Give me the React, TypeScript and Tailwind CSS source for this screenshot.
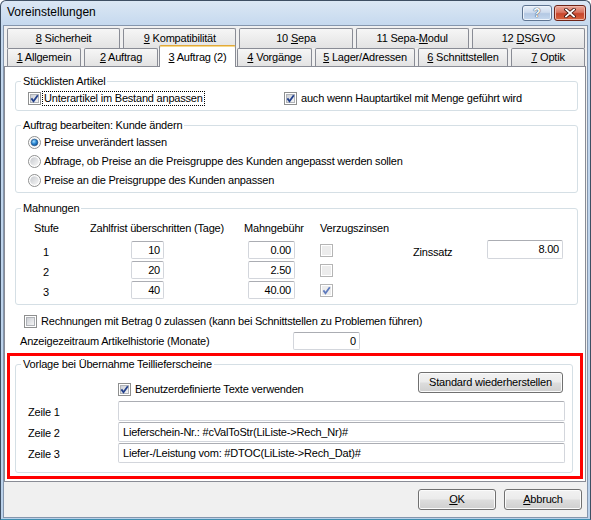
import React from 'react';

type CheckProps = { checked?: boolean; disabled?: boolean };

const CheckBox: React.FC<CheckProps> = ({ checked = false, disabled = false }) => (
  <svg width="13" height="13" viewBox="0 0 13 13" className="block shrink-0">
    <defs>
      <linearGradient id="cb-in" x1="0" y1="0" x2="1" y2="1">
        <stop offset="0" stopColor="#c9ccd2" />
        <stop offset="1" stopColor="#f7f7f7" />
      </linearGradient>
    </defs>
    <rect x="0.5" y="0.5" width="12" height="12" fill="#fff" stroke={disabled ? '#b5b5b5' : '#8e8f8f'} />
    {disabled ? (
      <rect x="2" y="2" width="9" height="9" fill="#ececec" />
    ) : (
      <rect x="2.5" y="2.5" width="8" height="8" fill="url(#cb-in)" stroke="#b0b3b8" />
    )}
    {checked && (
      <path
        d="M3.4 6.4 L5.5 9.3 L9.8 3.3"
        fill="none"
        stroke={disabled ? '#5f7bbd' : '#22408c'}
        strokeWidth="1.8"
      />
    )}
  </svg>
);

const Radio: React.FC<{ checked?: boolean }> = ({ checked = false }) => (
  <svg width="13" height="13" viewBox="0 0 13 13" className="block shrink-0">
    <defs>
      <linearGradient id="rb-in" x1="0" y1="0" x2="1" y2="1">
        <stop offset="0" stopColor="#c6c9ce" />
        <stop offset="1" stopColor="#f7f7f7" />
      </linearGradient>
      <radialGradient id="rb-dot" cx="0.4" cy="0.35" r="0.7">
        <stop offset="0" stopColor="#a8e0ff" />
        <stop offset="0.5" stopColor="#2b88d4" />
        <stop offset="1" stopColor="#0c4a8c" />
      </radialGradient>
    </defs>
    <circle cx="6.5" cy="6.5" r="6" fill="#fff" stroke="#8e8f8f" />
    <circle cx="6.5" cy="6.5" r="4.3" fill="url(#rb-in)" />
    {checked && <circle cx="6.5" cy="6.5" r="3.3" fill="url(#rb-dot)" stroke="#1b4f86" strokeWidth="0.6" />}
  </svg>
);

// read-only text box in the Win7 look
const Field: React.FC<{ value?: string; className?: string; left?: boolean }> = ({ value = '', className = '', left }) => (
  <div
    className={`bg-white border border-[#d3d6dc] border-t-[#abadb3] rounded-[2px] flex items-center whitespace-nowrap overflow-hidden ${
      left ? 'justify-start pl-[4px]' : 'justify-end pr-[3px]'
    } ${className}`}
  >
    {value}
  </div>
);

const Button: React.FC<{ className?: string; children: React.ReactNode }> = ({ className = '', children }) => (
  <button
    className={`h-[21px] border border-[#707070] rounded-[3px] bg-[linear-gradient(#f2f2f2_0%,#ebebeb_48%,#dddddd_52%,#cfcfcf_100%)] shadow-[inset_0_0_0_1px_#fbfbfb] text-center ${className}`}
  >
    {children}
  </button>
);

const Tab: React.FC<{ className?: string; children: React.ReactNode }> = ({ className = '', children }) => (
  <div
    className={`border border-b-0 border-[#898c95] rounded-t-[2px] bg-[linear-gradient(#f6f6f6,#e3e3e3)] text-center whitespace-nowrap ${className}`}
  >
    {children}
  </div>
);

const U: React.FC<{ children: React.ReactNode }> = ({ children }) => (
  <span className="underline underline-offset-[1px]">{children}</span>
);

export default function App() {
  return (
    <div className="w-[591px] h-[520px] flex flex-col rounded-t-[6px] border border-[#3e4f63] border-b-[#3f8fb0] bg-[linear-gradient(#dbe7f4,#c4d8ee_26px,#bad1ea)] px-[2px] pb-[1px] font-['Liberation_Sans',Arial,sans-serif] text-[11px] leading-[13px] tracking-[-0.2px] text-black">
      {/* Title bar */}
      <div className="h-[24px] flex items-start pt-[4px] pl-[4px] pr-[2px]">
        <span className="text-[12px] leading-[16px] tracking-normal -mt-[1px]">Voreinstellungen</span>
        <div className="ml-auto flex gap-[2px]">
          <div className="w-[30px] h-[16px] rounded-[3px] border border-[#5f7592] bg-[linear-gradient(#e8f0f9,#cfdcee_45%,#b3c8e3_55%,#c6d8ee)] shadow-[inset_0_0_0_1px_#eef4fb] flex items-center justify-center">
            <span className="text-[12px] leading-[12px] font-bold text-white tracking-normal [text-shadow:0_0_1px_#2b3c55,0_0_1px_#2b3c55]">
              ?
            </span>
          </div>
          <div className="w-[32px] h-[16px] rounded-[3px] border border-[#6e2418] bg-[linear-gradient(#eaa99b,#d9735f_45%,#c7452c_55%,#d8653f)] shadow-[inset_0_0_0_1px_#efb8ab] flex items-center justify-center">
            <svg width="12" height="10" viewBox="0 0 12 10">
              <path d="M2 1.5 L10 8.5 M10 1.5 L2 8.5" stroke="#3a0e07" strokeWidth="3.4" strokeLinecap="square" />
              <path d="M2 1.5 L10 8.5 M10 1.5 L2 8.5" stroke="#fff" strokeWidth="1.8" strokeLinecap="square" />
            </svg>
          </div>
        </div>
      </div>

      {/* Client area */}
      <div className="flex-1 flex flex-col border border-[#8596ad] bg-[#f0f0f0]">
        {/* Tabs */}
        <div className="pt-[2px] pl-[3px] pr-[2px]">
          <div className="h-[20px] flex gap-[3px]">
            <Tab className="flex-1 leading-[18px]"><U>8</U> Sicherheit</Tab>
            <Tab className="flex-1 leading-[18px]"><U>9</U> Kompatibilität</Tab>
            <Tab className="flex-1 leading-[18px]">10 <U>S</U>epa</Tab>
            <Tab className="flex-1 leading-[18px]">11 Sepa-<U>M</U>odul</Tab>
            <Tab className="flex-1 leading-[18px]">12 <U>D</U>SGVO</Tab>
          </div>
          <div className="h-[18px] flex items-end gap-[3px]">
            <Tab className="w-[74px] h-[18px] leading-[17px]"><U>1</U> Allgemein</Tab>
            <Tab className="w-[74px] h-[18px] leading-[17px]"><U>2</U> Auftrag</Tab>
            <div className="relative z-10 -mx-[2px] -mb-px w-[77px] h-[22px] border border-b-0 border-[#898c95] border-t-[#e2a93a] rounded-t-[2px] bg-white shadow-[inset_0_1px_0_#f7d98c] text-center whitespace-nowrap pt-[5px]">
              <U>3</U> Auftrag (2)
            </div>
            <Tab className="w-[75px] h-[18px] leading-[17px]"><U>4</U> Vorgänge</Tab>
            <Tab className="w-[100px] h-[18px] leading-[17px]"><U>5</U> Lager/Adressen</Tab>
            <Tab className="w-[90px] h-[18px] leading-[17px]"><U>6</U> Schnittstellen</Tab>
            <Tab className="w-[74px] h-[18px] leading-[17px]"><U>7</U> Optik</Tab>
          </div>
        </div>

        {/* Tab page */}
        <div className="mr-[1px] border border-[#898c95] bg-white px-[2px] pb-[2px] flex flex-col">
          {/* Stücklisten Artikel */}
          <fieldset className="mt-[8px] ml-[8px] mr-[5px] border border-[#d5dfe5] rounded-[3px] pt-[2px] pb-[4px] min-w-0">
            <legend className="ml-[5px] px-[2px]">Stücklisten Artikel</legend>
            <div className="h-[16px] flex items-center">
              <div className="w-[268px] flex items-center pl-[12px]">
                <CheckBox checked />
                <span className="ml-[1px] border border-dotted border-black px-[1px] leading-[13px]">
                  Unterartikel im Bestand anpassen
                </span>
              </div>
              <CheckBox checked />
              <span className="ml-[4px]">auch wenn Hauptartikel mit Menge geführt wird</span>
            </div>
          </fieldset>

          {/* Auftrag bearbeiten */}
          <fieldset className="mt-[8px] ml-[8px] mr-[5px] border border-[#d5dfe5] rounded-[3px] pt-[1px] pb-[2px] min-w-0">
            <legend className="ml-[5px] px-[2px]">Auftrag bearbeiten: Kunde ändern</legend>
            <div className="h-[19px] flex items-center pl-[12px]">
              <Radio checked />
              <span className="ml-[3px]">Preise unverändert lassen</span>
            </div>
            <div className="h-[19px] flex items-center pl-[12px]">
              <Radio />
              <span className="ml-[3px]">Abfrage, ob Preise an die Preisgruppe des Kunden angepasst werden sollen</span>
            </div>
            <div className="h-[19px] flex items-center pl-[12px]">
              <Radio />
              <span className="ml-[3px]">Preise an die Preisgruppe des Kunden anpassen</span>
            </div>
          </fieldset>

          {/* Mahnungen */}
          <fieldset className="mt-[9px] ml-[8px] mr-[5px] border border-[#d5dfe5] rounded-[3px] pt-[6px] pb-[5px] min-w-0">
            <legend className="ml-[5px] px-[2px]">Mahnungen</legend>
            <div className="h-[14px] flex items-center">
              <div className="w-[74px] pl-[18px]">Stufe</div>
              <div className="w-[154px]">Zahlfrist überschritten (Tage)</div>
              <div className="w-[76px]">Mahngebühr</div>
              <div>Verzugszinsen</div>
            </div>
            <div className="mt-[6px] flex flex-col gap-[2px]">
              {[
                { n: '1', tage: '10', fee: '0.00', zins: false },
                { n: '2', tage: '20', fee: '2.50', zins: false },
                { n: '3', tage: '40', fee: '40.00', zins: true },
              ].map((r, i) => (
                <div key={r.n} className="h-[18px] flex items-center">
                  <div className="w-[115px] self-stretch flex items-end pl-[27px]">{r.n}</div>
                  <Field value={r.tage} className="w-[33px] h-[18px]" />
                  <Field value={r.fee} className="ml-[84px] w-[47px] h-[18px]" />
                  <div className="ml-[25px]">
                    <CheckBox disabled checked={r.zins} />
                  </div>
                  {i === 0 && (
                    <>
                      <div className="ml-[80px] w-[74px] self-stretch flex items-end">Zinssatz</div>
                      <Field value="8.00" className="w-[76px] h-[19px] -mt-[1px]" />
                    </>
                  )}
                </div>
              ))}
            </div>
          </fieldset>

          <div className="mt-[8px] h-[16px] flex items-center pl-[17px]">
            <CheckBox />
            <span className="ml-[4px]">Rechnungen mit Betrag 0 zulassen (kann bei Schnittstellen zu Problemen führen)</span>
          </div>

          <div className="mt-[3px] h-[18px] flex items-center">
            <div className="w-[286px] pl-[13px]">Anzeigezeitraum Artikelhistorie (Monate)</div>
            <Field value="0" className="w-[67px] h-[18px]" />
          </div>

          {/* highlighted section */}
          <div className="mt-[3px] border-[3px] border-[#ff0000]">
            <fieldset className="mt-[2px] mb-[3px] ml-[5px] mr-[7px] border border-[#d5dfe5] rounded-[3px] pt-[1px] pb-[9px] min-w-0">
              <legend className="ml-[5px] px-[2px]">Vorlage bei Übernahme Teillieferscheine</legend>
              <div className="h-[24px] flex">
                <div className="w-[102px]" />
                <div className="self-end flex items-center h-[13px]">
                  <CheckBox checked />
                  <span className="ml-[4px]">Benutzerdefinierte Texte verwenden</span>
                </div>
                <Button className="ml-auto mr-[9px] w-[145px]">Standard wiederherstellen</Button>
              </div>
              <div className="mt-[5px] flex flex-col gap-[1px]">
                {[
                  { l: 'Zeile 1', v: '' },
                  { l: 'Zeile 2', v: 'Lieferschein-Nr.: #cValToStr(LiListe->Rech_Nr)#' },
                  { l: 'Zeile 3', v: 'Liefer-/Leistung vom: #DTOC(LiListe->Rech_Dat)#' },
                ].map((z) => (
                  <div key={z.l} className="h-[20px] flex items-center">
                    <div className="w-[102px] pl-[12px] pt-[2px]">{z.l}</div>
                    <Field left value={z.v} className="flex-1 mr-[7px] h-[20px]" />
                  </div>
                ))}
              </div>
            </fieldset>
          </div>
        </div>

        {/* Dialog buttons */}
        <div className="mt-[7px] h-[21px] flex justify-end gap-[8px] pr-[5px]">
          <Button className="w-[78px]"><U>O</U>K</Button>
          <Button className="w-[78px]"><U>A</U>bbruch</Button>
        </div>
      </div>
    </div>
  );
}
